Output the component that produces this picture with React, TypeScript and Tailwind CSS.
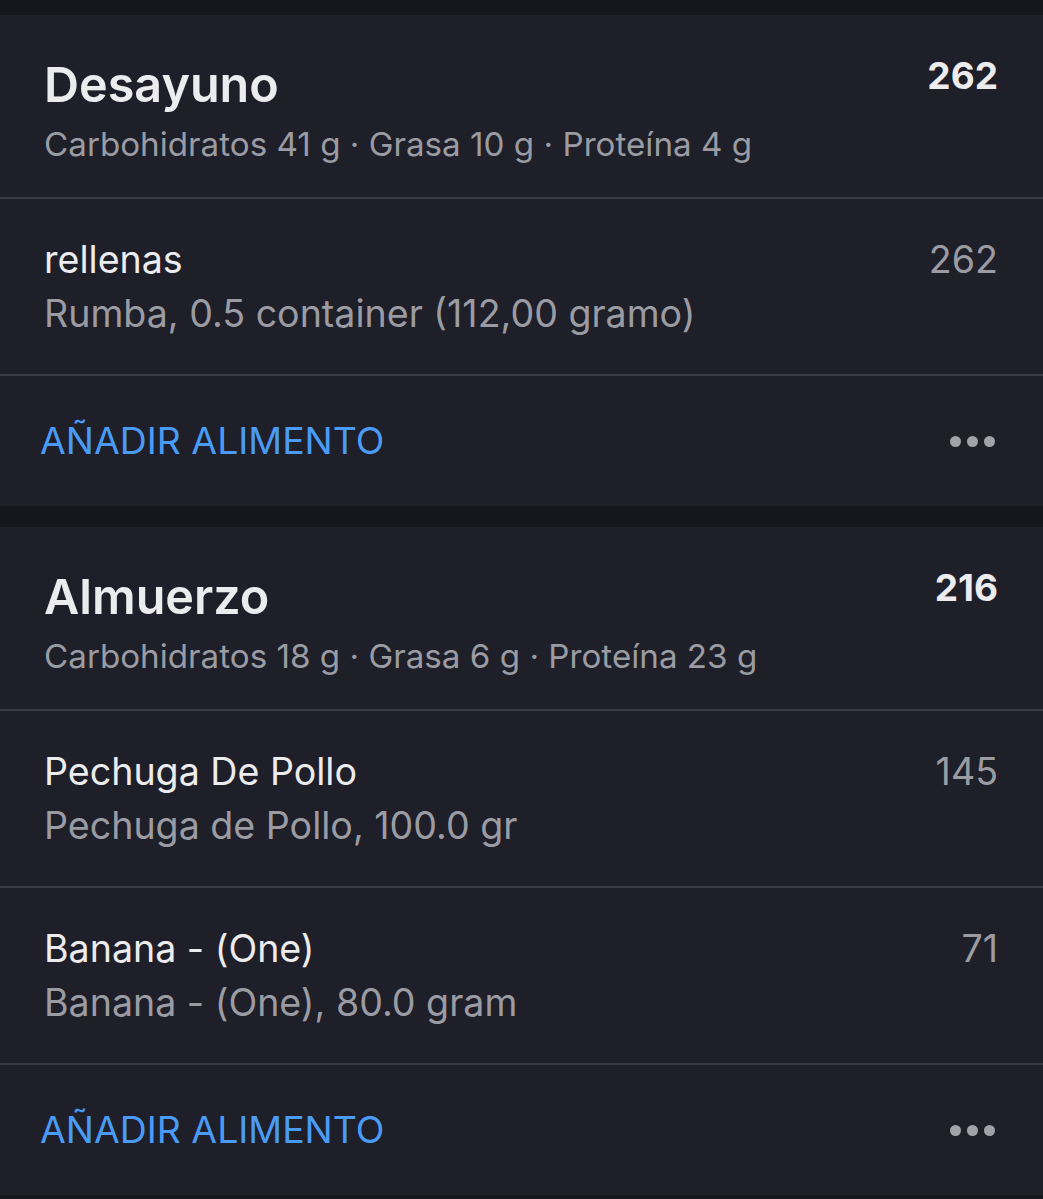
import React from "react";

type Item = { name: string; serving: string; cal: string };
type Meal = { title: string; macros: string; cal: string; items: Item[] };

const meals: Meal[] = [
  {
    title: "Desayuno",
    macros: "Carbohidratos 41 g · Grasa 10 g · Proteína 4 g",
    cal: "262",
    items: [{ name: "rellenas", serving: "Rumba, 0.5 container (112,00 gramo)", cal: "262" }],
  },
  {
    title: "Almuerzo",
    macros: "Carbohidratos 18 g · Grasa 6 g · Proteína 23 g",
    cal: "216",
    items: [
      { name: "Pechuga De Pollo", serving: "Pechuga de Pollo, 100.0 gr", cal: "145" },
      { name: "Banana - (One)", serving: "Banana - (One), 80.0 gram", cal: "71" },
    ],
  },
];

function Divider() {
  return <div className="h-[2px] bg-[#393b45]" />;
}

function MealCard({ meal }: { meal: Meal }) {
  return (
    <div className="bg-[#1e1f29]">
      <div className="flex h-[182px] justify-between pl-[44px] pr-[45px]">
        <div>
          <div className="mt-[42px] text-[48.5px] font-semibold leading-[56px] text-[#ececee]">{meal.title}</div>
          <div className="mt-[11px] text-[33.2px] leading-[40px] text-[#9b9ca3]">{meal.macros}</div>
        </div>
        <div className="mt-[39px] text-[37px] font-bold leading-[44px] text-[#ececee]">{meal.cal}</div>
      </div>
      {meal.items.map((it) => (
        <React.Fragment key={it.name}>
          <Divider />
          <div className="flex h-[175px] justify-between pl-[44px] pr-[45px]">
            <div>
              <div className="mt-[39px] text-[37.6px] leading-[44px] text-[#ececee]">{it.name}</div>
              <div className="mt-[10px] text-[37.6px] leading-[44px] text-[#9b9ca3]">{it.serving}</div>
            </div>
            <div className="mt-[39px] text-[37.6px] leading-[44px] text-[#9b9ca3]">{it.cal}</div>
          </div>
        </React.Fragment>
      ))}
      <Divider />
      <div className="flex h-[130px] items-center justify-between pl-[40px] pr-[48px]">
        <div className="text-[37.4px] leading-[44px] text-[#4a9bf5]">AÑADIR ALIMENTO</div>
        <div className="flex gap-[6px]">
          <span className="block h-[11px] w-[11px] rounded-full bg-[#a2a3aa]" />
          <span className="block h-[11px] w-[11px] rounded-full bg-[#a2a3aa]" />
          <span className="block h-[11px] w-[11px] rounded-full bg-[#a2a3aa]" />
        </div>
      </div>
    </div>
  );
}

export default function App() {
  return (
    <div
      className="min-h-[1199px] w-[1043px] bg-[#15171f] pt-[15px]"
      style={{ fontFamily: "Inter, 'Noto Sans', sans-serif" }}
    >
      <MealCard meal={meals[0]} />
      <div className="h-[21px]" />
      <MealCard meal={meals[1]} />
    </div>
  );
}
